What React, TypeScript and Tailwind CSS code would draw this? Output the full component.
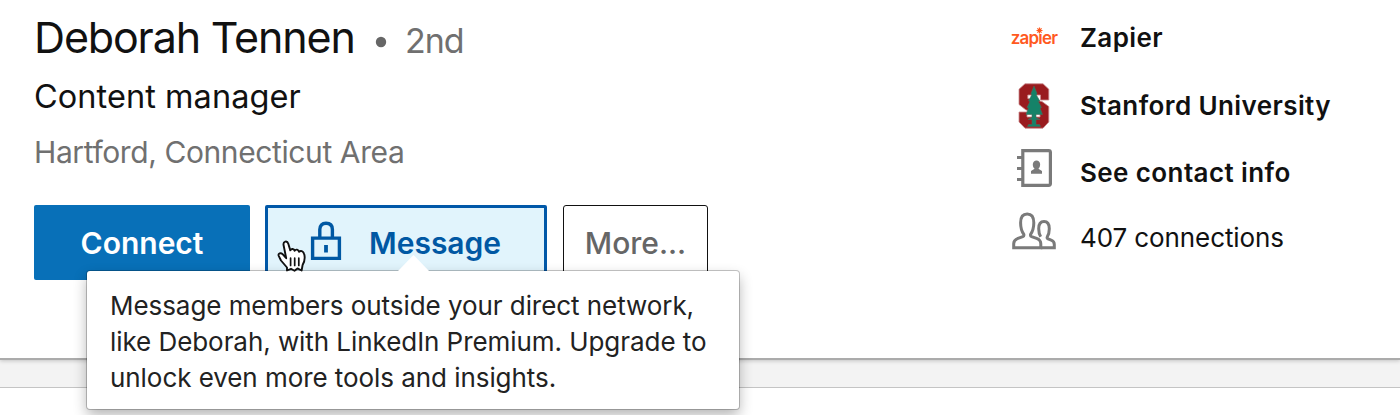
import type { ReactNode } from "react";

function LockIcon() {
  return (
    <svg width="32" height="40" viewBox="0 0 32 40" fill="none" stroke="#0058a3" strokeWidth="3.4">
      <path d="M2.6 17.1H29.4V37.4H2.6Z" />
      <path d="M9.8 17V8.6C9.8 4.6 12 2.3 16 2.3S22.4 4.6 22.4 8.6V17" />
      <path d="M16 24v7.5" strokeWidth="3.8" />
    </svg>
  );
}

function HandCursor() {
  return (
    <svg width="30" height="32" viewBox="0 0 30 32" fill="#fff" stroke="#111" strokeWidth="1.9" strokeLinejoin="round" strokeLinecap="round">
      <path d="M10 30.5V27.5L4 20.5L1.6 15.6C1 13.5 3.6 12.2 5.6 14.2L9.2 18.2L6.6 5.2C5.8 1.2 10.2 0.2 11.3 3.8L13.3 10.4C14.4 8.2 17 8.6 17.6 10.8C18.8 8.8 21.4 9.4 22 11.8C23.6 10.2 26.2 11 27 13.6C28.4 17.6 27.6 21.4 25.6 25L24.6 30.5L20.5 28.4L17.5 30.8L14 28.8Z" />
      <path d="M13.6 18.2V25.4M17.7 18.2V25.4M21.8 18.2V25.4" strokeWidth="1.7" />
    </svg>
  );
}

function ZapierLogo() {
  return (
    <span className="relative block text-[17px] leading-[20px] font-semibold tracking-[-0.8px] text-[#ff5a1f]">
      zapıer
      <svg className="absolute left-[25px] top-[-1px]" width="7" height="7" viewBox="0 0 7 7" stroke="#ff5a1f" strokeWidth="1.2">
        <path d="M3.5 0.5v6M0.5 3.5h6M1.4 1.4l4.2 4.2M5.6 1.4L1.4 5.6" />
      </svg>
    </span>
  );
}

function StanfordLogo() {
  return (
    <svg width="32" height="46" viewBox="0 0 32 46">
      <path d="M7 .8H25L30.8 6.2V17H22.5V12H9.8V15.5L24 18.5L30.8 23.5V39L25 45.2H7L1 39V29H9V34H22V30L8 27L1 21.5V6.2Z" fill="#991b1e" stroke="#c9898b" strokeWidth=".8" />
      <path d="M16 3L19 10.5L18.4 12L21.8 18L20.4 18.5L23.4 24.5L22 25L24.5 31.5H18V34.5L22 36.5H18V41.5H21.5L22.5 43.5H9.5L10.5 41.5H14V36.5H10L14 34.5V31.5H8L10.5 25L9 24.5L12 18.5L10.6 18L13.6 12L13 10.5Z" fill="#158268" stroke="#4d6a5b" strokeWidth=".6" />
    </svg>
  );
}

function ContactBookIcon() {
  return (
    <svg width="35" height="38" viewBox="0 0 35 38" fill="none" stroke="#7a7a7a" strokeWidth="3.2">
      <path d="M5.8 1.6H31.6Q33.4 1.6 33.4 3.4V34.6Q33.4 36.4 31.6 36.4H5.8Z" />
      <path d="M0 8.5H6M0 19.5H6M0 30.5H6" />
      <path d="M14 24.8V22L17.6 19.8C14.8 17.5 15.2 11.6 19.5 11.6S24.2 17.5 21.4 19.8L25 22V24.8Z" fill="#7a7a7a" stroke="none" />
    </svg>
  );
}

function PeopleIcon() {
  return (
    <svg width="44" height="38" viewBox="0 0 44 38" fill="none" stroke="#7a7a7a" strokeWidth="3">
      <path d="M1.7 35.8V31.8C1.7 28.8 3.2 27.4 6 26.4L10.8 24.6Q12.2 24 11.8 22.4C9.5 19.2 8.6 15.4 8.6 10.8C8.6 5.2 10.8 2 15.2 2S21.8 5.2 21.8 10.8C21.8 15.4 20.8 19.2 18.6 22.4Q18.2 24 19.6 24.6L24.6 26.4C27.4 27.4 28.8 28.8 28.8 31.8V35.8Z" />
      <path d="M28.8 35.8H42.3V32.4C42.3 30 41.3 29 39.2 28.2L36 26.8Q34.6 26.2 35.3 24.8C36.8 22.4 37.3 20 37.3 16.8C37.3 12.4 35.7 9.6 32 9.6S26.7 12.4 26.7 16.8C26.7 20 27.2 22.4 28.7 24.8" />
    </svg>
  );
}

function InfoRow({ icon, className, children }: { icon: ReactNode; className: string; children: ReactNode }) {
  return (
    <li className={`flex items-center ${className}`}>
      <span className="flex w-[46px] shrink-0 justify-center">{icon}</span>
      <span className="ml-[23px] whitespace-nowrap">{children}</span>
    </li>
  );
}

export default function App() {
  return (
    <div className="h-[415px] w-[1400px] overflow-hidden bg-[#f3f3f3] font-['Inter',sans-serif]">
      <section className="flex h-[360px] justify-between border-b-2 border-[#ababab] bg-white shadow-[0_1px_4px_rgba(0,0,0,0.2)]">
        <div className="ml-[34px] pt-[11px]">
          <h1 className="flex h-[52px] items-baseline whitespace-nowrap text-[43px] leading-[52px] font-normal text-[#111]">
            <span className="w-[341px] tracking-[-1.15px]">Deborah Tennen</span>
            <svg className="self-center translate-y-[5px]" width="12" height="12" viewBox="0 0 12 12">
              <circle cx="6" cy="6" r="5.2" fill="#666" />
            </svg>
            <span className="ml-[18px] text-[34px] tracking-[-1px] text-[#707070]">2nd</span>
          </h1>
          <p className="pt-[2px] whitespace-nowrap text-[32.5px] leading-[63px] tracking-[0.05px] text-[#111]">Content manager</p>
          <p className="whitespace-nowrap text-[30px] leading-[49px] tracking-[-0.4px] text-[#707070]">Hartford, Connecticut Area</p>

          <div className="relative mt-[28px] flex h-[75px] whitespace-nowrap text-[30px] font-semibold">
            <button className="w-[216px] rounded-[2px] bg-[#0870b8] pt-[2px] text-white">Connect</button>
            <button className="ml-[15px] flex w-[282px] items-center rounded-[2px] border-[3px] border-[#0058a8] bg-[#e1f4fc] text-[#0058a3]">
              <span className="-mt-[3px] ml-[42px]"><LockIcon /></span>
              <span className="ml-[27px] pt-[2px]">Message</span>
            </button>
            <button className="ml-[16px] w-[145px] rounded-[3px] border border-[#111] bg-white pt-[2px] font-medium text-[#666]">More...</button>

            <span className="absolute left-[243px] top-[35px] z-10"><HandCursor /></span>

            <div role="tooltip" className="absolute left-[53px] top-[66px] h-[138px] w-[652px] rounded-[3px] bg-white pt-[17px] pl-[23px] text-[26px] leading-[36px] font-normal tracking-[-0.06px] text-[#222] shadow-[0_0_0_1px_rgba(0,0,0,0.22),0_6px_14px_rgba(0,0,0,0.3)]">
              <svg className="absolute left-[311px] top-[-16px]" width="31" height="17" viewBox="0 0 31 17">
                <path d="M0 16L15.5 0L31 16V17H0Z" fill="#fff" />
              </svg>
              <p>Message members outside your direct network,</p>
              <p>like Deborah, with LinkedIn Premium. Upgrade to</p>
              <p>unlock even more tools and insights.</p>
            </div>
          </div>
        </div>

        <ul className="w-[389px] pt-[4px] text-[26px] leading-[36px] font-semibold tracking-[0.4px] text-[#111]">
          <InfoRow icon={<ZapierLogo />} className="h-[68px]">Zapier</InfoRow>
          <InfoRow icon={<StanfordLogo />} className="h-[68px]">Stanford University</InfoRow>
          <InfoRow icon={<span className="-mt-[10px]"><ContactBookIcon /></span>} className="h-[65px]">See contact info</InfoRow>
          <InfoRow icon={<span className="-mt-[13px]"><PeopleIcon /></span>} className="h-[65px] font-normal tracking-[-0.1px]">407 connections</InfoRow>
        </ul>
      </section>
      <section className="mt-[27px] h-[40px] border-t border-[#c4c4c4] bg-white" />
    </div>
  );
}
